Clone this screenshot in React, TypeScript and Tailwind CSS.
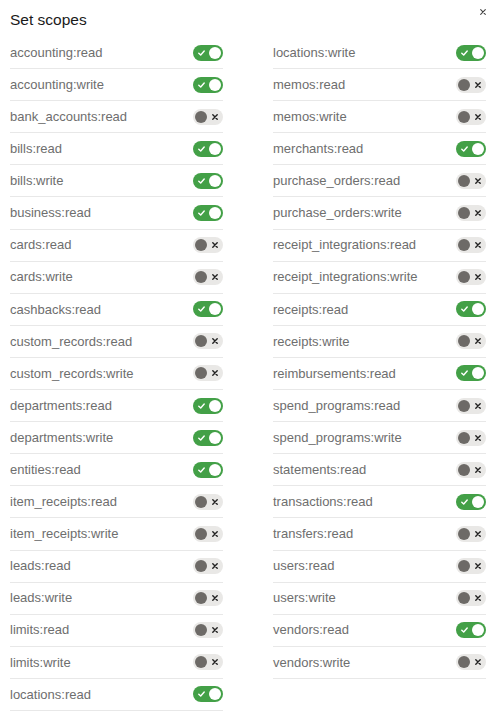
import React from "react";

type Scope = { name: string; on: boolean };

const left: Scope[] = [
  { name: "accounting:read", on: true },
  { name: "accounting:write", on: true },
  { name: "bank_accounts:read", on: false },
  { name: "bills:read", on: true },
  { name: "bills:write", on: true },
  { name: "business:read", on: true },
  { name: "cards:read", on: false },
  { name: "cards:write", on: false },
  { name: "cashbacks:read", on: true },
  { name: "custom_records:read", on: false },
  { name: "custom_records:write", on: false },
  { name: "departments:read", on: true },
  { name: "departments:write", on: true },
  { name: "entities:read", on: true },
  { name: "item_receipts:read", on: false },
  { name: "item_receipts:write", on: false },
  { name: "leads:read", on: false },
  { name: "leads:write", on: false },
  { name: "limits:read", on: false },
  { name: "limits:write", on: false },
  { name: "locations:read", on: true },
];

const right: Scope[] = [
  { name: "locations:write", on: true },
  { name: "memos:read", on: false },
  { name: "memos:write", on: false },
  { name: "merchants:read", on: true },
  { name: "purchase_orders:read", on: false },
  { name: "purchase_orders:write", on: false },
  { name: "receipt_integrations:read", on: false },
  { name: "receipt_integrations:write", on: false },
  { name: "receipts:read", on: true },
  { name: "receipts:write", on: false },
  { name: "reimbursements:read", on: true },
  { name: "spend_programs:read", on: false },
  { name: "spend_programs:write", on: false },
  { name: "statements:read", on: false },
  { name: "transactions:read", on: true },
  { name: "transfers:read", on: false },
  { name: "users:read", on: false },
  { name: "users:write", on: false },
  { name: "vendors:read", on: true },
  { name: "vendors:write", on: false },
];

function Toggle({ on }: { on: boolean }) {
  if (on) {
    return (
      <div className="relative h-[16px] w-[30px] rounded-full bg-[#43a047]">
        <svg className="absolute left-[5px] top-[5px]" width="7" height="6" viewBox="0 0 7 6">
          <path d="M0.8 3.2 L2.7 5 L6.2 1" fill="none" stroke="white" strokeWidth="1.4" strokeLinecap="round" strokeLinejoin="round" />
        </svg>
        <div className="absolute right-[2px] top-[2px] h-[12px] w-[12px] rounded-full bg-white" />
      </div>
    );
  }
  return (
    <div className="relative h-[16px] w-[30px] rounded-full bg-[#e9e8e6]">
      <div className="absolute left-[2px] top-[2px] h-[12px] w-[12px] rounded-full bg-[#6d6a67]" />
      <svg className="absolute right-[5px] top-[5px]" width="6" height="6" viewBox="0 0 6 6">
        <path d="M0.8 0.8 L5.2 5.2 M5.2 0.8 L0.8 5.2" fill="none" stroke="#222" strokeWidth="1.4" strokeLinecap="round" />
      </svg>
    </div>
  );
}

function Column({ items }: { items: Scope[] }) {
  return (
    <div className="flex flex-col">
      {items.map((s) => (
        <div key={s.name} className="flex h-[32.1px] items-center justify-between border-b border-[#e8e8e8]">
          <span className="text-[13px] text-[#6e6e6e]">{s.name}</span>
          <Toggle on={s.on} />
        </div>
      ))}
    </div>
  );
}

export default function App() {
  return (
    <div className="relative h-[719px] w-[492px] bg-white pl-[10px] pr-[6px] font-['Liberation_Sans',Arial,sans-serif]">
      <button type="button" className="absolute right-[6px] top-[9px]">
        <svg width="6" height="6" viewBox="0 0 6 6">
          <path d="M0.7 0.7 L5.3 5.3 M5.3 0.7 L0.7 5.3" fill="none" stroke="#444" strokeWidth="1.1" strokeLinecap="round" />
        </svg>
      </button>
      <h1 className="pt-[9px] text-[15.5px] leading-[21px] text-[#1a1a1a]">Set scopes</h1>
      <div className="mt-[7px] grid grid-cols-[213px_213px] gap-x-[50px]">
        <Column items={left} />
        <Column items={right} />
      </div>
    </div>
  );
}
